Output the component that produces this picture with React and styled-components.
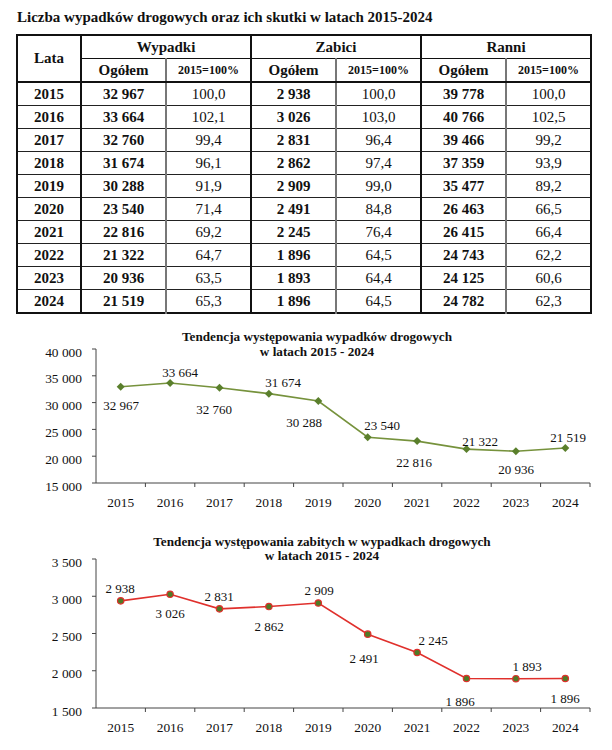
import { createGlobalStyle, styled } from 'styled-components';

const GlobalStyle = createGlobalStyle`
  html, body {
    margin: 0;
    padding: 0;
    background: #fff;
  }
  body {
    font-family: "Liberation Serif", "Times New Roman", serif;
    color: #111;
  }
`;

const Page = styled.div`
  width: 612px;
  height: 750px;
  padding-top: 8px;
  box-sizing: border-box;
  overflow: hidden;
`;

const Title = styled.h1`
  margin: 0;
  padding-left: 17px;
  font-size: 15px;
  line-height: 18px;
  font-weight: bold;
`;

const Table = styled.table`
  margin: 8px 0 0 16px;
  width: 574px;
  table-layout: fixed;
  border-collapse: collapse;
  border: 2px solid #111;
  font-size: 15px;
`;

const Th = styled.th`
  height: 22px;
  padding: 0;
  font-weight: bold;
  font-size: ${({ $small }) => ($small ? '12px' : '15px')};
  text-align: center;
  border-bottom: ${({ $thick }) => ($thick ? '2px solid #111' : '1px solid #111')};
  border-left: ${({ $sep }) => ($sep === 'inner' ? '2px solid #777' : '2px solid #111')};
`;

const Td = styled.td`
  height: 22px;
  padding: 0;
  text-align: center;
  font-weight: ${({ $bold }) => ($bold ? 'bold' : 'normal')};
  border-bottom: 1px solid #222;
  border-left: ${({ $sep }) => ($sep === 'inner' ? '2px solid #777' : '2px solid #111')};
  line-height: 20px;
`;

const ChartSvg = styled.svg`
  display: block;
  font-family: "Liberation Serif", "Times New Roman", serif;
`;

const rows = [
  ['2015', '32 967', '100,0', '2 938', '100,0', '39 778', '100,0'],
  ['2016', '33 664', '102,1', '3 026', '103,0', '40 766', '102,5'],
  ['2017', '32 760', '99,4', '2 831', '96,4', '39 466', '99,2'],
  ['2018', '31 674', '96,1', '2 862', '97,4', '37 359', '93,9'],
  ['2019', '30 288', '91,9', '2 909', '99,0', '35 477', '89,2'],
  ['2020', '23 540', '71,4', '2 491', '84,8', '26 463', '66,5'],
  ['2021', '22 816', '69,2', '2 245', '76,4', '26 415', '66,4'],
  ['2022', '21 322', '64,7', '1 896', '64,5', '24 743', '62,2'],
  ['2023', '20 936', '63,5', '1 893', '64,4', '24 125', '60,6'],
  ['2024', '21 519', '65,3', '1 896', '64,5', '24 782', '62,3'],
];

const years = rows.map((r) => r[0]);

const fmt = (n) => String(n).replace(/\B(?=(\d{3})+(?!\d))/g, '\u00a0');

const accidents = {
  y0: 318,
  h: 198,
  title: ['Tendencja występowania wypadków drogowych', 'w latach 2015 - 2024'],
  titleX: 317,
  titleY: [337, 352],
  top: 353,
  bottom: 487,
  min: 15000,
  max: 40000,
  step: 5000,
  values: [32967, 33664, 32760, 31674, 30288, 23540, 22816, 21322, 20936, 21519],
  labels: [[121, 406], [180, 373], [214, 410], [283, 383], [304, 423], [382, 426], [414, 463], [480, 442], [516, 470], [568, 438]],
  line: '#76923c',
  marker: 'diamond',
};

const killed = {
  y0: 516,
  h: 234,
  title: ['Tendencja występowania zabitych w wypadkach drogowych', 'w latach 2015 - 2024'],
  titleX: 322,
  titleY: [542, 556],
  top: 563,
  bottom: 712,
  min: 1500,
  max: 3500,
  step: 500,
  values: [2938, 3026, 2831, 2862, 2909, 2491, 2245, 1896, 1893, 1896],
  labels: [[120, 589], [170, 614], [219, 597], [269, 627], [319, 591], [364, 659], [433, 641], [460, 702], [527, 667], [565, 699]],
  line: '#e0302c',
  marker: 'dot',
};

const LEFT = 96;
const RIGHT = 590;
// nudge so that the glyphs' visual centre sits on the given y
const DY = 3;

function Chart({ cfg }) {
  const slot = (RIGHT - LEFT) / cfg.values.length;
  const xAt = (i) => LEFT + slot * (i + 0.5);
  const yAt = (v) => cfg.bottom - ((v - cfg.min) / (cfg.max - cfg.min)) * (cfg.bottom - cfg.top);
  const ticks = [];
  for (let v = cfg.min; v <= cfg.max; v += cfg.step) ticks.push(v);
  const pts = cfg.values.map((v, i) => `${xAt(i)},${yAt(v)}`).join(' ');

  return (
    <ChartSvg width="612" height={cfg.h} viewBox={`0 ${cfg.y0} 612 ${cfg.h}`}>
      {cfg.title.map((t, i) => (
        <text key={t} x={cfg.titleX} y={cfg.titleY[i] + DY} textAnchor="middle" dominantBaseline="central" fontSize="13.2" fontWeight="bold" fill="#111">
          {t}
        </text>
      ))}
      <line x1={LEFT} y1={cfg.top} x2={LEFT} y2={cfg.bottom} stroke="#444" strokeWidth="1" />
      <line x1={LEFT} y1={cfg.bottom} x2={RIGHT} y2={cfg.bottom} stroke="#444" strokeWidth="1" />
      {ticks.map((v) => (
        <g key={v}>
          <line x1={LEFT - 4} y1={yAt(v)} x2={LEFT} y2={yAt(v)} stroke="#444" />
          <text x={82} y={yAt(v) + DY} textAnchor="end" dominantBaseline="central" fontSize="13.4" fill="#111">
            {fmt(v)}
          </text>
        </g>
      ))}
      {cfg.values.map((_, i) => (
        <line key={i} x1={LEFT + slot * (i + 1)} y1={cfg.bottom} x2={LEFT + slot * (i + 1)} y2={cfg.bottom + 4} stroke="#444" />
      ))}
      {years.map((y, i) => (
        <text key={y} x={xAt(i)} y={cfg.bottom + 16 + DY} textAnchor="middle" dominantBaseline="central" fontSize="13.4" fill="#111">
          {y}
        </text>
      ))}
      <polyline points={pts} fill="none" stroke={cfg.line} strokeWidth="1.6" />
      {cfg.values.map((v, i) =>
        cfg.marker === 'diamond' ? (
          <polygon
            key={i}
            points={`${xAt(i)},${yAt(v) - 4} ${xAt(i) + 4},${yAt(v)} ${xAt(i)},${yAt(v) + 4} ${xAt(i) - 4},${yAt(v)}`}
            fill="#5a7f2c"
          />
        ) : (
          <circle key={i} cx={xAt(i)} cy={yAt(v)} r="3.2" fill="#4f7a26" stroke={cfg.line} strokeWidth="1.2" />
        )
      )}
      {cfg.values.map((v, i) => (
        <text key={i} x={cfg.labels[i][0]} y={cfg.labels[i][1] + DY} textAnchor="middle" dominantBaseline="central" fontSize="13" fill="#111">
          {fmt(v)}
        </text>
      ))}
    </ChartSvg>
  );
}

export default function App() {
  return (
    <Page>
      <GlobalStyle />
      <Title>Liczba wypadków drogowych oraz ich skutki w latach 2015-2024</Title>
      <Table>
        <colgroup>
          <col style={{ width: 64 }} />
          <col style={{ width: 85 }} />
          <col style={{ width: 85 }} />
          <col style={{ width: 85 }} />
          <col style={{ width: 85 }} />
          <col style={{ width: 85 }} />
          <col style={{ width: 85 }} />
        </colgroup>
        <thead>
          <tr>
            <Th rowSpan={2} $thick>Lata</Th>
            <Th colSpan={2}>Wypadki</Th>
            <Th colSpan={2}>Zabici</Th>
            <Th colSpan={2}>Ranni</Th>
          </tr>
          <tr>
            <Th $thick>Ogółem</Th>
            <Th $thick $small $sep="inner">2015=100%</Th>
            <Th $thick>Ogółem</Th>
            <Th $thick $small $sep="inner">2015=100%</Th>
            <Th $thick>Ogółem</Th>
            <Th $thick $small $sep="inner">2015=100%</Th>
          </tr>
        </thead>
        <tbody>
          {rows.map((r) => (
            <tr key={r[0]}>
              {r.map((c, i) => (
                <Td key={i} $bold={i === 0 || i % 2 === 1} $sep={i > 0 && i % 2 === 0 ? 'inner' : 'outer'}>
                  {c.replace(' ', '\u00a0')}
                </Td>
              ))}
            </tr>
          ))}
        </tbody>
      </Table>
      <Chart cfg={accidents} />
      <Chart cfg={killed} />
    </Page>
  );
}
